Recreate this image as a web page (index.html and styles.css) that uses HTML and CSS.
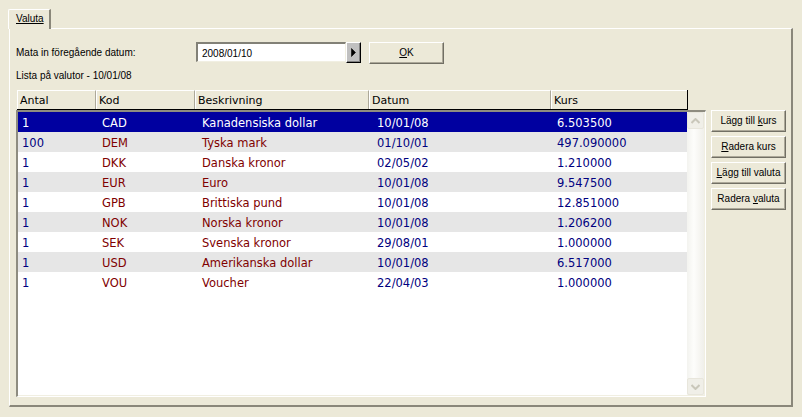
FILE: index.html
```html
<!DOCTYPE html>
<html>
<head>
<meta charset="utf-8">
<link rel="stylesheet" href="styles.css">
</head>
<body>
<div class="window">
  <div class="tabs"><div class="tab"><u>Valuta</u></div></div>
  <div class="panel">
    <div class="row-date">
      <span class="lbl">Mata in föregående datum:</span>
      <div class="datebox">
        <div class="input">2008/01/10</div>
        <div class="arrow"><svg width="7" height="11" viewBox="0 0 7 11"><path d="M1.5 1.5 L5.5 5.5 L1.5 9.5 Z" fill="#000" stroke="#000" stroke-width="0.6"/></svg></div>
      </div>
      <div class="btn ok"><span><u>O</u>K</span></div>
    </div>
    <div class="lista">Lista på valutor - 10/01/08</div>
    <div class="main">
      <div class="gridwrap">
        <div class="header">
          <div class="hc c1">Antal</div>
          <div class="hc c2">Kod</div>
          <div class="hc c3">Beskrivning</div>
          <div class="hc c4">Datum</div>
          <div class="hc c5">Kurs</div>
        </div>
        <div class="list">
          <div class="rows">
            <div class="r sel"><span class="d1">1</span><span class="d2">CAD</span><span class="d3">Kanadensiska dollar</span><span class="d4">10/01/08</span><span class="d5">6.503500</span></div>
            <div class="r alt"><span class="d1">100</span><span class="d2">DEM</span><span class="d3">Tyska mark</span><span class="d4">01/10/01</span><span class="d5">497.090000</span></div>
            <div class="r"><span class="d1">1</span><span class="d2">DKK</span><span class="d3">Danska kronor</span><span class="d4">02/05/02</span><span class="d5">1.210000</span></div>
            <div class="r alt"><span class="d1">1</span><span class="d2">EUR</span><span class="d3">Euro</span><span class="d4">10/01/08</span><span class="d5">9.547500</span></div>
            <div class="r"><span class="d1">1</span><span class="d2">GPB</span><span class="d3">Brittiska pund</span><span class="d4">10/01/08</span><span class="d5">12.851000</span></div>
            <div class="r alt"><span class="d1">1</span><span class="d2">NOK</span><span class="d3">Norska kronor</span><span class="d4">10/01/08</span><span class="d5">1.206200</span></div>
            <div class="r"><span class="d1">1</span><span class="d2">SEK</span><span class="d3">Svenska kronor</span><span class="d4">29/08/01</span><span class="d5">1.000000</span></div>
            <div class="r alt"><span class="d1">1</span><span class="d2">USD</span><span class="d3">Amerikanska dollar</span><span class="d4">10/01/08</span><span class="d5">6.517000</span></div>
            <div class="r"><span class="d1">1</span><span class="d2">VOU</span><span class="d3">Voucher</span><span class="d4">22/04/03</span><span class="d5">1.000000</span></div>
          </div>
          <div class="scroll">
            <div class="sb up"><svg width="9" height="6" viewBox="0 0 9 6"><path d="M0.5 5 L4.5 1 L8.5 5" fill="none" stroke="#C9C7BA" stroke-width="2"/></svg></div>
            <div class="sb down"><svg width="9" height="6" viewBox="0 0 9 6"><path d="M0.5 1 L4.5 5 L8.5 1" fill="none" stroke="#C9C7BA" stroke-width="2"/></svg></div>
          </div>
        </div>
      </div>
      <div class="side">
        <div class="btn"><span>Lägg till <u>k</u>urs</span></div>
        <div class="btn"><span><u>R</u>adera kurs</span></div>
        <div class="btn"><span><u>L</u>ägg till valuta</span></div>
        <div class="btn"><span>Radera <u>v</u>aluta</span></div>
      </div>
    </div>
  </div>
</div>
</body>
</html>
```
FILE: styles.css
```css
html, body {
  margin: 0;
  padding: 0;
  background: #ECE9D8;
}
body {
  width: 802px;
  height: 417px;
  overflow: hidden;
  font-family: "Liberation Sans", Arial, sans-serif;
  font-size: 10px;
  color: #000;
}
.window {
  padding-left: 8px;
  padding-top: 9px;
}
.tabs {
  display: flex;
  height: 19px;
}
.tab {
  width: 43px;
  height: 20px;
  box-sizing: border-box;
  border-top: 1px solid #fff;
  border-left: 1px solid #fff;
  border-right: 2px solid #8A877A;
  border-top-left-radius: 2px;
  padding: 3px 0 0 7px;
  line-height: 12px;
  position: relative;
  z-index: 1;
  background: #ECE9D8;
}
.panel {
  margin-left: 1px;
  width: 784px;
  height: 379px;
  box-sizing: border-box;
  border-top: 1px solid #fff;
  border-left: 1px solid #fff;
  border-right: 2px solid #8A877A;
  border-bottom: 2px solid #8A877A;
  padding: 13px 0 0 6px;
}
.row-date {
  display: flex;
  align-items: flex-start;
  height: 22px;
}
.lbl {
  width: 180px;
  padding-top: 5px;
  line-height: 12px;
}
.datebox {
  display: flex;
  height: 20px;
}
.input {
  width: 150px;
  height: 20px;
  box-sizing: border-box;
  border-top: 2px solid #828177;
  border-left: 2px solid #828177;
  border-bottom: 1px solid #F1EFE2;
  border-right: 1px solid #F1EFE2;
  background: #fff;
  padding: 3px 0 0 4px;
  line-height: 13px;
}
.arrow {
  width: 15px;
  height: 21px;
  box-sizing: border-box;
  border: 1px solid #000;
  border-top-color: #fff;
  border-left-color: #fff;
  background: #C0C0C0;
  display: flex;
  align-items: center;
  justify-content: center;
  box-shadow: inset -1px -1px 0 #808080;
}
.btn {
  width: 75px;
  height: 22px;
  box-sizing: border-box;
  border-top: 1px solid #fff;
  border-left: 1px solid #fff;
  border-right: 1px solid #716F64;
  border-bottom: 1px solid #716F64;
  box-shadow: inset -1px -1px 0 #ACA899;
  background: #ECE9D8;
  display: flex;
  align-items: center;
  justify-content: center;
  line-height: 12px;
  white-space: nowrap;
}
.ok {
  margin-left: 8px;
}
.lista {
  margin-top: 6px;
  height: 12px;
  line-height: 12px;
}
.main {
  display: flex;
  margin-top: 8px;
}
.gridwrap {
  width: 690px;
}
.header {
  margin-left: 1px;
  width: 671px;
  height: 20px;
  box-sizing: border-box;
  display: flex;
  background: #ECE9D8;
  border-right: 1px solid #000;
  border-bottom: 1px solid #000;
  font-family: "DejaVu Sans", Tahoma, sans-serif;
  font-size: 11px;
}
.hc {
  box-sizing: border-box;
  height: 19px;
  border-left: 1px solid #fff;
  border-top: 1px solid #fff;
  border-right: 1px solid #ACA899;
  padding: 3px 0 0 2px;
  line-height: 14px;
}
.hc.c1 { width: 79px; }
.hc.c2 { width: 99px; }
.hc.c3 { width: 174px; }
.hc.c4 { width: 182px; }
.hc.c5 { flex: 1; border-right: none; }
.list {
  width: 690px;
  height: 287px;
  box-sizing: border-box;
  border-top: 2px solid #8E8C80;
  border-left: 2px solid #8E8C80;
  border-right: 1px solid #fff;
  border-bottom: 1px solid #fff;
  box-shadow: inset -1px -1px 0 #F1EFE2;
  background: #fff;
  display: flex;
}
.rows {
  flex: 1;
  font-family: "DejaVu Sans", Tahoma, sans-serif;
  font-size: 11.5px;
}
.r {
  height: 20px;
  display: flex;
  align-items: center;
  line-height: 14px;
  padding-top: 1px;
  box-sizing: border-box;
}
.r.alt { background: #E6E6E6; }
.r.sel { background: #0000A0; }
.r span { display: block; white-space: nowrap; }
.d1 { width: 84px; padding-left: 4px; box-sizing: border-box; color: #000080; }
.d2 { width: 100px; color: #800000; }
.d3 { width: 175px; color: #800000; }
.d4 { width: 180px; color: #000080; }
.d5 { color: #000080; }
.r.sel span { color: #fff; }
.scroll {
  width: 17px;
  margin-right: 1px;
  margin-bottom: 1px;
  background: linear-gradient(to right, #F3F3EF, #FDFDFB 40%, #F0EFEA);
  display: flex;
  flex-direction: column;
  justify-content: space-between;
}
.sb {
  width: 17px;
  height: 17px;
  box-sizing: border-box;
  border: 1px solid #E8E6DC;
  border-radius: 2px;
  background: #F0EFE8;
  display: flex;
  align-items: center;
  justify-content: center;
}
.side {
  margin-left: 5px;
  margin-top: 20px;
  display: flex;
  flex-direction: column;
  gap: 4px;
}
```
